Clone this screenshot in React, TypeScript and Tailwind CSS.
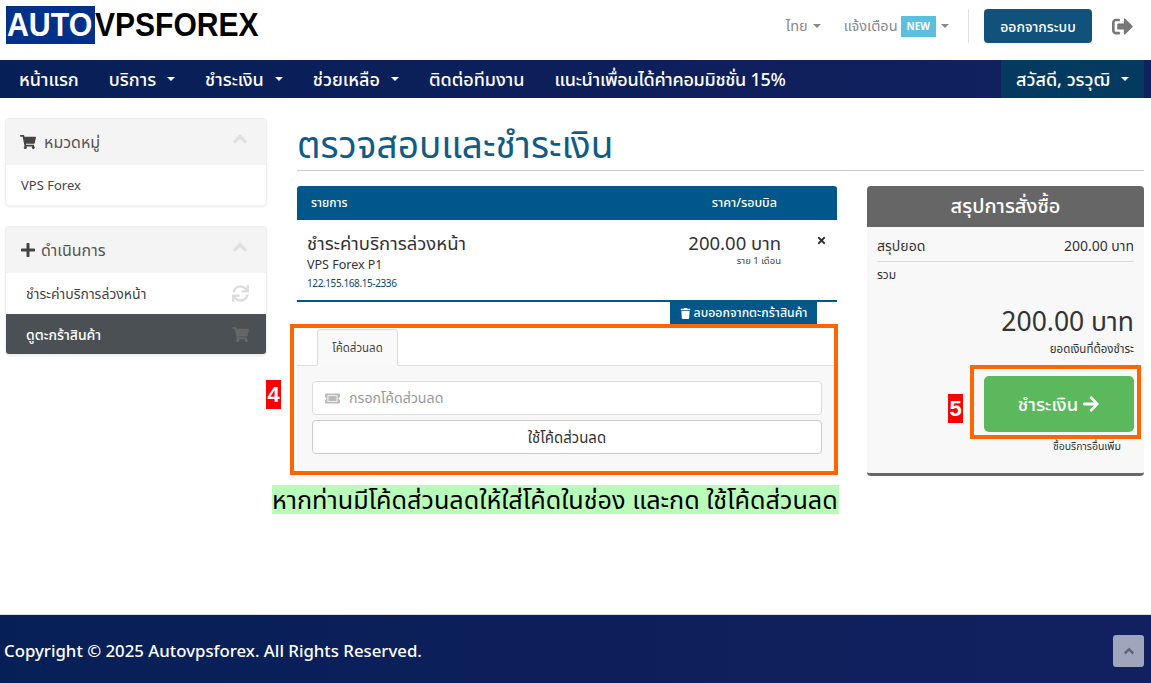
import React from "react";
import {
  FaShoppingCart,
  FaPlus,
  FaSync,
  FaTrash,
  FaTicketAlt,
  FaArrowRight,
  FaSignOutAlt,
  FaTimes,
  FaAngleUp,
} from "react-icons/fa";

const Caret = ({ className = "" }: { className?: string }) => (
  <span className={`inline-block w-0 h-0 border-x-[4px] border-x-transparent border-t-[4px] ${className}`} />
);

const navItems = [
  { label: "หน้าแรก" },
  { label: "บริการ", caret: true },
  { label: "ชำระเงิน", caret: true },
  { label: "ช่วยเหลือ", caret: true },
  { label: "ติดต่อทีมงาน" },
  { label: "แนะนำเพื่อนได้ค่าคอมมิชชั่น 15%", tight: true },
];

function SideHeader({ icon, label, gap }: { icon: React.ReactNode; label: string; gap: string }) {
  return (
    <div className="h-[46px] bg-[#f4f4f4] flex items-center pl-[14px] pr-[15px] text-[#555] text-[16px]">
      <span className={`text-[#444] ${gap}`}>{icon}</span>
      <span>{label}</span>
      <FaAngleUp className="ml-auto text-[#e0e0e0] text-[22px] -mt-[6px]" />
    </div>
  );
}

export default function App() {
  return (
    <div className="relative h-[683px] flex flex-col overflow-hidden bg-white font-['Noto_Sans','Noto_Sans_Thai','DejaVu_Sans',sans-serif]">
      <header className="h-[60px] flex items-center shrink-0">
        <div className="ml-[6px] -mt-[10px] flex items-center font-['Liberation_Sans',sans-serif] font-bold text-[33px] leading-[38px]">
          <span className="bg-[#003087] text-white w-[89px] h-[38px] overflow-hidden">
            <span className="inline-block origin-left scale-x-[0.92] pl-[1px]">AUTO</span>
          </span>
          <span className="text-black inline-block origin-left scale-x-[0.91]">VPSFOREX</span>
        </div>
        <div className="ml-auto -mt-[8px] flex items-center text-[14.5px] text-[#888]">
          <span>ไทย</span>
          <Caret className="ml-[5px] border-t-[#888]" />
          <span className="ml-[23px]">แจ้งเตือน</span>
          <span className="ml-[3px] bg-[#5bc0de] text-white text-[10px] font-bold px-[6px] h-[21px] flex items-center">NEW</span>
          <Caret className="ml-[5px] border-t-[#888]" />
          <span className="ml-[19px] w-px h-[34px] bg-[#e0e0e0]" />
          <button className="ml-[15px] w-[108px] h-[34px] rounded-[4px] bg-[#10527c] text-white text-[14px] font-medium">ออกจากระบบ</button>
          <FaSignOutAlt className="ml-[20px] mr-[18px] text-[#777] text-[21px]" />
        </div>
      </header>

      <nav className="h-[38px] shrink-0 flex items-center bg-gradient-to-r from-[#071f57] to-[#12205f] text-white text-[18px] font-medium pl-[19px]">
        {navItems.map((item) => (
          <span key={item.label} className={`flex items-center mr-[30px] ${item.tight ? "tracking-[-0.3px]" : ""}`}>
            {item.label}
            {item.caret && <Caret className="ml-[11px] border-t-white" />}
          </span>
        ))}
        <span className="ml-auto mr-[7px] h-full w-[143px] bg-[#053a60] flex items-center justify-center">
          สวัสดี, วรวุฒิ
          <Caret className="ml-[11px] border-t-white" />
        </span>
      </nav>

      <div className="flex-1 flex">
        <aside className="w-[262px] ml-[5px] mt-[20px] shrink-0">
          <div className="rounded-[4px] border border-[#eee] shadow-[0_1px_2px_rgba(0,0,0,0.08)] overflow-hidden">
            <SideHeader icon={<FaShoppingCart />} label="หมวดหมู่" gap="mr-[8px]" />
            <div className="h-[40px] px-[15px] pt-[2px] flex items-center text-[13px] text-[#444]">VPS Forex</div>
          </div>
          <div className="mt-[20px] rounded-[4px] border border-[#eee] shadow-[0_1px_2px_rgba(0,0,0,0.08)] overflow-hidden">
            <SideHeader icon={<FaPlus />} label="ดำเนินการ" gap="mr-[5px]" />
            <div className="h-[41px] pl-[20px] pr-[17px] flex items-center justify-between text-[14px] text-[#444]">
              ชำระค่าบริการล่วงหน้า
              <FaSync className="text-[#ddd] text-[17px]" />
            </div>
            <div className="h-[40px] pl-[20px] pr-[17px] flex items-center justify-between text-[14px] text-white bg-[#4a5054] font-medium">
              ดูตะกร้าสินค้า
              <FaShoppingCart className="text-[#666] text-[17px]" />
            </div>
          </div>
        </aside>

        <main className="ml-[30px] w-[847px] pt-[21px]">
          <h1 className="h-[52px] border-b border-[#ccc] text-[#0f5c85] text-[37px] leading-[50px] font-normal">ตรวจสอบและชำระเงิน</h1>
          <div className="mt-[15px] flex">
            <div className="w-[540px]">
              <div className="h-[34px] bg-[#01568a] rounded-t-[3px] flex items-center text-white font-medium">
                <span className="ml-[14px] text-[12px]">รายการ</span>
                <span className="ml-auto mr-[60px] text-[12.5px]">ราคา/รอบบิล</span>
              </div>
              <div className="h-[82px] border-b-2 border-[#01568a] flex pl-[10px] pr-[10px] pt-[11px]">
                <div>
                  <div className="text-[18.5px] leading-[24px] text-[#333]">ชำระค่าบริการล่วงหน้า</div>
                  <div className="text-[12.5px] leading-[20px] text-[#333]">VPS Forex P1</div>
                  <div className="text-[10px] leading-[15px] mt-[1px] text-[#0b4a6e] tracking-[-0.4px]">122.155.168.15-2336</div>
                </div>
                <div className="ml-auto text-right mr-[35px]">
                  <div className="text-[18.5px] leading-[24px] text-[#333]">200.00 บาท</div>
                  <div className="text-[9.5px] leading-[12px] text-[#444]">ราย 1 เดือน</div>
                </div>
                <FaTimes className="mt-[4px] text-[#333] text-[11px] shrink-0" />
              </div>
              <div className="flex justify-end pr-[20px]">
                <button className="h-[23px] w-[147px] bg-[#01568a] text-white text-[12.3px] font-medium flex items-center justify-center gap-[3px] whitespace-nowrap">
                  <FaTrash className="text-[11px]" />
                  ลบออกจากตะกร้าสินค้า
                </button>
              </div>
              <div>
                <div className="h-[41px] pl-[20px] flex items-end border-b border-[#ddd]">
                  <span className="w-[81px] h-[37px] -mb-px bg-[#f9f9f9] border border-[#ddd] border-b-[#f9f9f9] rounded-t-[4px] flex items-center justify-center text-[11.5px] text-[#444]">โค้ดส่วนลด</span>
                </div>
                <div className="h-[105px] bg-[#f8f8f8] px-[15px] pt-[15px]">
                  <div className="h-[34px] bg-white border border-[#ddd] rounded-[4px] flex items-center pl-[12px] text-[14.2px] text-[#999]">
                    <FaTicketAlt className="text-[#bbb] text-[15px] mr-[9px]" />
                    กรอกโค้ดส่วนลด
                  </div>
                  <button className="mt-[5px] w-full h-[34px] bg-white border border-[#ccc] rounded-[4px] text-[15px] text-[#333]">ใช้โค้ดส่วนลด</button>
                </div>
              </div>
            </div>

            <div className="ml-[30px] w-[277px] self-start rounded-[4px] overflow-hidden bg-[#f8f8f8] border-b-[3px] border-[#666]">
              <div className="h-[41px] bg-[#666] text-white text-[20px] font-medium flex items-center justify-center pb-[2px]">สรุปการสั่งซื้อ</div>
              <div className="px-[10px] pt-[10px]">
                <div className="flex justify-between h-[25px] border-b border-[#ddd] text-[14px] leading-[18px] text-[#333]">
                  <span>สรุปยอด</span>
                  <span>200.00 บาท</span>
                </div>
                <div className="text-[12px] text-[#333] mt-[6px] leading-[14px]">รวม</div>
                <div className="text-right text-[26.5px] leading-[34px] text-[#333] mt-[22px]">200.00 บาท</div>
                <div className="text-right text-[11.5px] leading-[16px] text-[#333] mt-[3px]">ยอดเงินที่ต้องชำระ</div>
                <div className="flex justify-end mt-[19px]">
                  <button className="w-[150px] h-[56px] bg-[#5cb85c] rounded-[5px] text-white text-[18.5px] font-medium flex items-center justify-center gap-[4px]">
                    ชำระเงิน
                    <FaArrowRight className="text-[18px]" />
                  </button>
                </div>
                <div className="text-right pr-[13px] text-[10.5px] leading-[14px] text-[#333] mt-[7px] pb-[20px]">ซื้อบริการอื่นเพิ่ม</div>
              </div>
            </div>
          </div>
        </main>
      </div>

      <footer className="h-[69px] shrink-0 bg-gradient-to-r from-[#071f57] to-[#12205f] border-t border-[#ddd] flex items-center pl-[4px] pt-[3px] text-white text-[16.8px] font-medium">
        Copyright © 2025 Autovpsforex. All Rights Reserved.
      </footer>

      {/* annotations drawn over the page */}
      <div className="absolute left-[290px] top-[324px] w-[548px] h-[151px] border-4 border-[#ff6600]" />
      <div className="absolute left-[266px] top-[380px] w-[15px] h-[29px] bg-[#ff0000] text-white font-['Liberation_Sans',sans-serif] font-bold text-[22px] flex items-center justify-center">4</div>
      <div className="absolute left-[272px] top-[485px] w-[567px] h-[29px] bg-[#b9fbb9] text-black text-[25.2px] leading-[29px] whitespace-nowrap">หากท่านมีโค้ดส่วนลดให้ใส่โค้ดในช่อง และกด ใช้โค้ดส่วนลด</div>
      <div className="absolute left-[970px] top-[365px] w-[171px] h-[74px] border-4 border-[#ff6600]" />
      <div className="absolute left-[948px] top-[394px] w-[15px] h-[29px] bg-[#ff0000] text-white font-['Liberation_Sans',sans-serif] font-bold text-[22px] flex items-center justify-center">5</div>
      <button className="absolute left-[1113px] top-[635px] w-[31px] h-[32px] rounded-[3px] bg-[#9fa5bb] flex items-center justify-center text-[#5d6580]">
        <FaAngleUp className="text-[16px]" />
      </button>
    </div>
  );
}
